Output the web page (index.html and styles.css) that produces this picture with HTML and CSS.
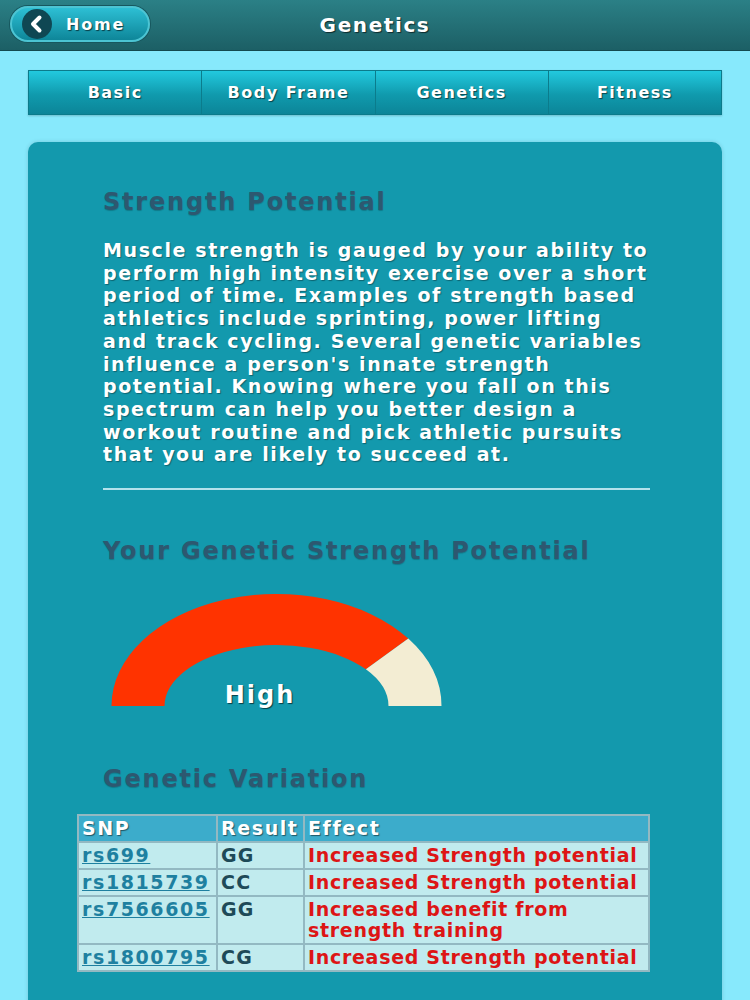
FILE: index.html
```html
<!DOCTYPE html>
<html lang="en">
<head>
    <meta charset="UTF-8">
    <meta name="viewport" content="width=device-width, initial-scale=1.0">
    <title>Genetics</title>
    <link rel="stylesheet" href="styles.css">
</head>
<body>
    <header class="topbar">
        <a href="#" class="home-btn">
            <span class="home-icon">
                <svg width="30" height="30" viewBox="0 0 30 30">
                    <path d="M17.5 8.5 L11 15 L17.5 21.5" fill="none" stroke="#fff" stroke-width="4" stroke-linecap="round" stroke-linejoin="round"/>
                </svg>
            </span>
            <span>Home</span>
        </a>
        <h1>Genetics</h1>
    </header>

    <nav class="tabs">
        <a href="#">Basic</a>
        <a href="#">Body Frame</a>
        <a href="#">Genetics</a>
        <a href="#">Fitness</a>
    </nav>

    <main class="card">
        <h2>Strength Potential</h2>
        <p class="intro">Muscle strength is gauged by your ability to perform high intensity exercise over a short period of time. Examples of strength based athletics include sprinting, power lifting and track cycling. Several genetic variables influence a person's innate strength potential. Knowing where you fall on this spectrum can help you better design a workout routine and pick athletic pursuits that you are likely to succeed at.</p>
        <div class="divider"></div>

        <h2 class="gauge-title">Your Genetic Strength Potential</h2>
        <svg class="gauge" width="350" height="124" viewBox="0 0 350 124">
            <path d="M8.5 114 A165 112 0 0 1 305.3 46.6 L262.9 77.3 A112 61 0 0 0 61.5 114 Z" fill="#ff3300"/>
            <path d="M305.3 46.6 A165 112 0 0 1 338.5 114 L285.5 114 A112 61 0 0 0 262.9 77.3 Z" fill="#f3edd3"/>
            <text x="157" y="111" class="gauge-label" text-anchor="middle">High</text>
        </svg>

        <h2 class="variation-title">Genetic Variation</h2>
        <table class="snp-table">
            <colgroup>
                <col style="width: 139px">
                <col style="width: 87px">
                <col>
            </colgroup>
            <tr>
                <th>SNP</th>
                <th>Result</th>
                <th>Effect</th>
            </tr>
            <tr>
                <td><a href="#">rs699</a></td>
                <td class="result">GG</td>
                <td class="effect">Increased Strength potential</td>
            </tr>
            <tr>
                <td><a href="#">rs1815739</a></td>
                <td class="result">CC</td>
                <td class="effect">Increased Strength potential</td>
            </tr>
            <tr>
                <td><a href="#">rs7566605</a></td>
                <td class="result">GG</td>
                <td class="effect">Increased benefit from strength training</td>
            </tr>
            <tr>
                <td><a href="#">rs1800795</a></td>
                <td class="result">CG</td>
                <td class="effect">Increased Strength potential</td>
            </tr>
        </table>
    </main>
</body>
</html>
```

FILE: styles.css
```css
body {
    margin: 0;
    padding: 0;
    background-color: #87e9fc;
    font-family: "DejaVu Sans", Verdana, sans-serif;
    font-weight: bold;
    height: 1000px;
    overflow: hidden;
}
.topbar {
    height: 50px;
    background: linear-gradient(#2b8086, #1c5f65);
    border-bottom: 1px solid #134a50;
    display: flex;
    align-items: center;
    justify-content: center;
    position: relative;
}
.topbar h1 {
    margin: 0;
    color: white;
    font-size: 20px;
    letter-spacing: 1.6px;
    text-shadow: 1px 1px 1px rgba(0, 0, 0, 0.6);
}
.home-btn {
    position: absolute;
    left: 10px;
    top: 6px;
    width: 126px;
    height: 32px;
    border-radius: 18px;
    border: 2px solid #4cc4d3;
    box-shadow: 0 0 0 1px #17575e;
    background: linear-gradient(#2dbfd4, #0e8699);
    display: flex;
    align-items: center;
    gap: 14px;
    padding-left: 10px;
    color: white;
    text-decoration: none;
    font-size: 16px;
    letter-spacing: 1.8px;
    text-shadow: 1px 1px 1px rgba(0, 0, 0, 0.6);
}
.home-icon {
    width: 30px;
    height: 30px;
    border-radius: 50%;
    background-color: #0f4753;
    display: flex;
}
.tabs {
    display: flex;
    margin: 19px 28px 0 28px;
    height: 43px;
    border: 1px solid #0b7b8b;
    box-shadow: 0 1px 2px rgba(0, 0, 0, 0.2);
}
.tabs a {
    flex: 1;
    display: flex;
    align-items: center;
    justify-content: center;
    background: linear-gradient(#22c9de, #109aad 55%, #0c8598);
    color: white;
    text-decoration: none;
    font-size: 16px;
    letter-spacing: 1.5px;
    text-shadow: 1px 1px 1px rgba(0, 0, 0, 0.55);
    border-left: 1px solid #0b7c8c;
}
.tabs a:first-child {
    border-left: none;
}
.card {
    display: block;
    margin: 27px 28px 0 28px;
    padding: 45px 72px 40px 75px;
    background-color: #1399ad;
    border-radius: 10px;
    box-shadow: 0 0 4px rgba(0, 0, 0, 0.15);
}
.card h2 {
    margin: 0;
    font-size: 24px;
    line-height: 30px;
    letter-spacing: 1.8px;
    color: #2d5870;
    text-shadow: 0 1px 1px rgba(0, 0, 0, 0.2);
}
.intro {
    margin: 22px 0 0 0;
    width: 549px;
    color: white;
    font-size: 19px;
    line-height: 22.7px;
    letter-spacing: 1.6px;
    text-shadow: 1px 1px 1px rgba(0, 0, 0, 0.35);
}
.divider {
    height: 2px;
    background-color: #b3e2ec;
    margin-top: 22px;
    width: 547px;
}
.card h2.gauge-title {
    margin-top: 46px;
}
.gauge {
    display: block;
    margin-top: 26px;
}
.gauge-label {
    fill: white;
    font-size: 24px;
    font-weight: bold;
    letter-spacing: 2px;
    text-shadow: 1px 1px 1px rgba(0, 0, 0, 0.6);
}
.card h2.variation-title {
    margin-top: 48px;
}
.snp-table {
    margin: 20px 0 0 -26px;
    width: 573px;
    table-layout: fixed;
    border-collapse: collapse;
    font-size: 19px;
    letter-spacing: 1.2px;
}
.snp-table th,
.snp-table td {
    border: 2px solid #93b9c2;
    padding: 2px 3px;
    line-height: 21px;
    text-align: left;
    vertical-align: top;
}
.snp-table th {
    background-color: #3caccb;
    color: white;
    letter-spacing: 1.6px;
    text-shadow: 1px 1px 1px rgba(0, 0, 0, 0.5);
}
.snp-table td {
    background-color: #c1ebee;
}
.snp-table td a {
    color: #1e80a0;
    letter-spacing: 1.6px;
}
.result {
    color: #1e4a58;
}
.effect {
    color: #dd1515;
    letter-spacing: 0.7px;
}
```
